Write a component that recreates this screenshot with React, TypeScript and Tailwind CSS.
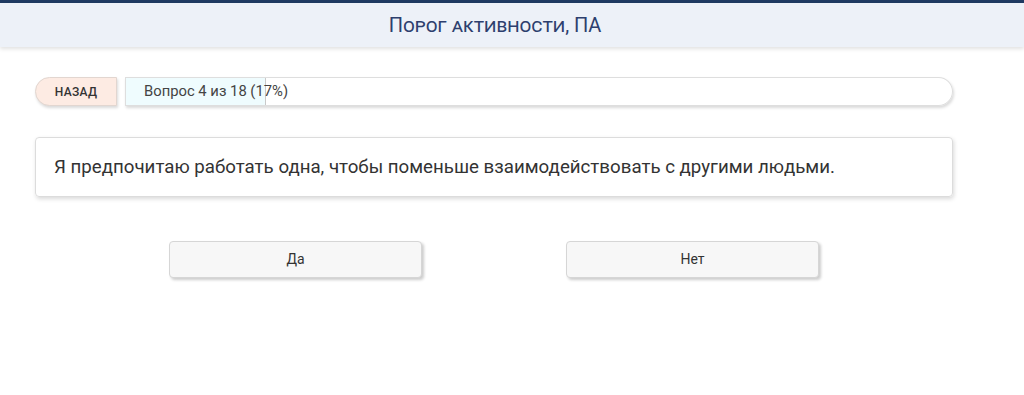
export default function App() {
  const progress = 17;
  return (
    <div className="min-h-[395px] bg-white font-['Roboto','Liberation_Sans',sans-serif] text-[#333]">
      <div className="h-[3px] bg-[#1f3a62]" />
      <header className="flex h-[44px] items-center justify-center bg-[#edf1f8] pr-[34px] shadow-[0_2px_4px_rgba(0,0,0,0.12)]">
        <h1 className="text-[20px] text-[#2d3f6e] [font-variant:small-caps]">
          Порог активности, ПА
        </h1>
      </header>

      <main className="ml-[35px] w-[918px] pt-[30px]">
        <div className="flex h-[29px] items-stretch gap-[8px]">
          <button className="w-[82px] rounded-l-full border border-[#e2d6d0] bg-[#fdebe3] pt-[1px] text-[12px] font-medium uppercase tracking-wide text-[#333] shadow-[1px_2px_3px_rgba(0,0,0,0.15)]">
            Назад
          </button>
          <div className="relative flex flex-1 items-center overflow-hidden rounded-l-[3px] rounded-r-full border border-[#dedede] shadow-[1px_2px_3px_rgba(0,0,0,0.15)]">
            <div
              className="absolute inset-y-0 left-0 border-r border-[#c9c9c9] bg-[#effcfe]"
              style={{ width: `${progress}%` }}
            />
            <span className="relative pl-[18px] text-[14.8px] text-[#444]">
              Вопрос 4 из 18 (17%)
            </span>
          </div>
        </div>

        <div className="mt-[31px] flex h-[60px] items-center rounded-[4px] border border-[#dcdcdc] px-[18px] text-[18.7px] text-[#333] shadow-[1px_2px_4px_rgba(0,0,0,0.15)]">
          Я предпочитаю работать одна, чтобы поменьше взаимодействовать с другими людьми.
        </div>

        <div className="mt-[44px] flex justify-center gap-[144px]">
          <button className="h-[37px] w-[253px] rounded-[4px] border border-[#d6d6d6] bg-[#f7f7f7] text-[14px] text-[#333] shadow-[2px_2px_3px_rgba(0,0,0,0.2)]">
            Да
          </button>
          <button className="h-[37px] w-[253px] rounded-[4px] border border-[#d6d6d6] bg-[#f7f7f7] text-[14px] text-[#333] shadow-[2px_2px_3px_rgba(0,0,0,0.2)]">
            Нет
          </button>
        </div>
      </main>
    </div>
  );
}
